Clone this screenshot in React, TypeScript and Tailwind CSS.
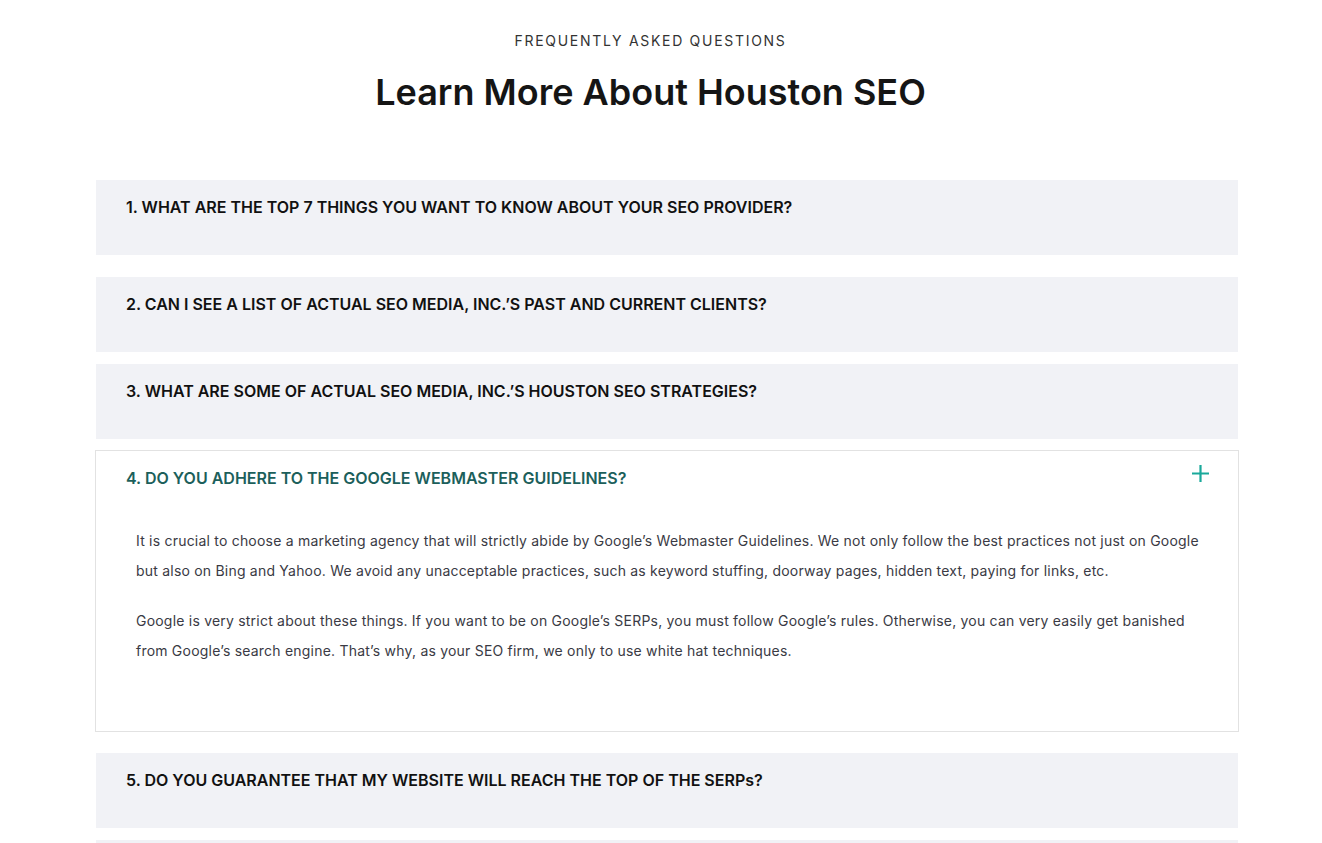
import React from "react";

const items = [
  { q: "1. WHAT ARE THE TOP 7 THINGS YOU WANT TO KNOW ABOUT YOUR SEO PROVIDER?", mb: "mb-[22px]" },
  { q: "2. CAN I SEE A LIST OF ACTUAL SEO MEDIA, INC.’S PAST AND CURRENT CLIENTS?", mb: "mb-[12px]" },
  { q: "3. WHAT ARE SOME OF ACTUAL SEO MEDIA, INC.’S HOUSTON SEO STRATEGIES?", mb: "mb-[11px]" },
];

function Closed({ q, mb }: { q: string; mb: string }) {
  return (
    <div className={`bg-[#f1f2f6] h-[75px] pl-[30px] pr-[30px] pt-[15px] ${mb}`}>
      <h3 className="text-[16px] leading-[24px] font-semibold text-[#111111]">{q}</h3>
    </div>
  );
}

export default function App() {
  return (
    <div className="h-[843px] bg-white font-['Inter','Noto_Sans',sans-serif] overflow-hidden">
      <div className="pt-[32px] pr-[21px] flex flex-col items-center">
        <p className="text-[14px] leading-[18px] tracking-[1.7px] text-[#333333] font-normal">FREQUENTLY ASKED QUESTIONS</p>
        <h2 className="mt-[20px] text-[36px] leading-[44px] font-semibold text-[#151515]">Learn More About Houston SEO</h2>
      </div>
      <div className="mx-[96px] mt-[66px] w-[1142px]">
        {items.map((it) => (
          <Closed key={it.q} q={it.q} mb={it.mb} />
        ))}
        <div className="border border-[#e2e2e2] -mx-px mb-[21px] pl-[30px] pr-[30px] pt-[15px] h-[282px]">
          <div className="flex items-start justify-between">
            <h3 className="text-[16px] leading-[24px] font-semibold text-[#1c5f5b]">4. DO YOU ADHERE TO THE GOOGLE WEBMASTER GUIDELINES?</h3>
            <svg width="17" height="17" viewBox="0 0 17 17" className="mt-[-1px] mr-[-1px]">
              <path d="M8.5 0v17M0 8.5h17" stroke="#1aa99b" strokeWidth="2.2" />
            </svg>
          </div>
          <div className="pl-[10px] pr-0 pt-[36px] text-[14px] leading-[30px] tracking-[0.21px] text-[#3a3a44]">
            <p className="mb-[20px]">
              It is crucial to choose a marketing agency that will strictly abide by Google’s Webmaster Guidelines. We not only follow the best practices not just on Google but also on Bing and Yahoo. We avoid any unacceptable practices, such as keyword stuffing, doorway pages, hidden text, paying for links, etc.
            </p>
            <p>
              Google is very strict about these things. If you want to be on Google’s SERPs, you must follow Google’s rules. Otherwise, you can very easily get banished from Google’s search engine. That’s why, as your SEO firm, we only to use white hat techniques.
            </p>
          </div>
        </div>
        <Closed q="5. DO YOU GUARANTEE THAT MY WEBSITE WILL REACH THE TOP OF THE SERPs?" mb="mb-[12px]" />
        <div className="bg-[#f1f2f6] h-[75px]" />
      </div>
    </div>
  );
}
